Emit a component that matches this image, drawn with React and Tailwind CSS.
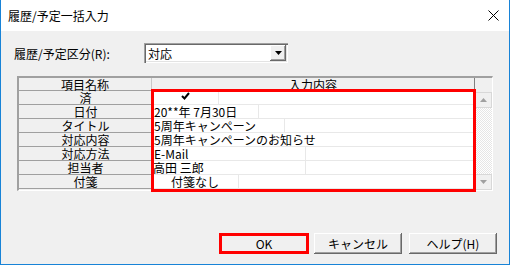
import React from 'react';

const rows = [
  { name: '済', first: 'w-[67px] justify-center', content: 'check' },
  { name: '日付', first: 'w-[107px] pl-[2px]', content: '20**年 7月30日' },
  { name: 'タイトル', first: 'w-[133px] pl-[2px]', content: '5周年キャンペーン' },
  { name: '対応内容', first: 'w-[323px] pl-[2px]', content: '5周年キャンペーンのお知らせ', full: true },
  { name: '対応方法', first: 'w-[154px] pl-[2px]', content: 'E-Mail' },
  { name: '担当者', first: 'w-[154px] pl-[1px]', content: '高田 三郎' },
  { name: '付箋', first: 'w-[87px] justify-center', content: '付箋なし' },
];

function Check() {
  return (
    <svg width="9" height="8" viewBox="0 0 9 8" className="mt-[1px]">
      <path d="M1 4 L3.5 6.5 L8 1" stroke="#000" strokeWidth="2" fill="none" />
    </svg>
  );
}

function Button({ children }) {
  return (
    <div className="w-[88px] h-[21px] flex items-center justify-center bg-[#f0f0f0] shadow-[inset_-1px_-1px_#696969,inset_1px_1px_#ffffff,inset_-2px_-2px_#a0a0a0]">
      {children}
    </div>
  );
}

function ScrollArrow({ up }) {
  return (
    <div className="h-[16px] flex items-center justify-center bg-[#f0f0f0] border border-[#d8d8d8]">
      <svg width="7" height="4" viewBox="0 0 7 4">
        <path d={up ? 'M0 4 L3.5 0 L7 4 Z' : 'M0 0 L3.5 4 L7 0 Z'} fill="#a0a0a0" />
      </svg>
    </div>
  );
}

export default function App() {
  return (
    <div className="w-[510px] h-[265px] flex flex-col border-x border-b border-[#1883d7] bg-[#f0f0f0] text-black text-[12px] leading-[13px] font-['Noto_Sans_CJK_JP','Noto_Sans',sans-serif]">
      {/* title bar */}
      <div className="h-[31px] shrink-0 bg-white flex items-center justify-between pl-[7px] pr-[10px]">
        <span className="text-[12px]">履歴/予定一括入力</span>
        <svg width="11" height="11" viewBox="0 0 11 11">
          <path d="M0.5 0.5 L10.5 10.5 M10.5 0.5 L0.5 10.5" stroke="#000" strokeWidth="1" />
        </svg>
      </div>

      {/* client area */}
      <div className="flex-1 flex flex-col pl-[16px] pt-[12px]">
        <div className="flex items-center h-[20px]">
          <span className="w-[130px] -ml-[3px] pt-[1px]">履歴/予定区分(R):</span>
          <div className="w-[144px] h-[20px] flex items-center bg-white shadow-[inset_1px_1px_#a0a0a0,inset_2px_2px_#696969,inset_-1px_-1px_#ffffff,inset_-2px_-2px_#e3e3e3] pl-[4px] pr-[2px]">
            <span className="flex-1 pt-[1px]">対応</span>
            <div className="w-[16px] h-[16px] flex items-center justify-center bg-[#f0f0f0] shadow-[inset_-1px_-1px_#696969,inset_1px_1px_#ffffff,inset_-2px_-2px_#a0a0a0]">
              <svg width="7" height="4" viewBox="0 0 7 4">
                <path d="M0 0 L3.5 4 L7 0 Z" fill="#000" />
              </svg>
            </div>
          </div>
        </div>

        {/* grid */}
        <div className="relative mt-[13px] w-[476px] h-[115px] flex border-t-2 border-l-2 border-t-[#a0a0a0] border-l-[#a0a0a0] border-b border-r border-b-white border-r-white">
          <div className="w-[456px] flex flex-col">
            <div className="h-[13px] flex border-b border-[#a0a0a0]">
              <div className="w-[133px] flex justify-center border-r border-[#c8c8c8]">項目名称</div>
              <div className="w-[323px] flex justify-center border-r border-[#808080]">入力内容</div>
            </div>
            {rows.map((r) => (
              <div key={r.name} className="h-[14px] flex">
                <div className="w-[133px] flex justify-center border-b border-r border-[#a0a0a0] pl-[1px]">{r.name}</div>
                <div className="w-[323px] flex bg-white border-b border-[#e8e8e8]">
                  <div className={`${r.first} flex whitespace-nowrap ${r.full ? '' : 'border-r border-[#e8e8e8]'}`}>
                    {r.content === 'check' ? <Check /> : r.content}
                  </div>
                </div>
              </div>
            ))}
          </div>
          <div className="w-[17px] flex flex-col">
            <div className="h-[14px] bg-[#f0f0f0]"></div>
            <ScrollArrow up />
            <div className="flex-1 bg-[image:repeating-conic-gradient(#e6e6e6_0_25%,#ffffff_0_50%)] bg-[length:2px_2px]"></div>
            <ScrollArrow />
          </div>
          <div className="absolute left-[132px] top-[11px] w-[325px] h-[103px] border-[3px] border-[#ff0000]"></div>
        </div>

        {/* buttons */}
        <div className="flex mt-[42px] pl-[203px]">
          <div className="relative">
            <Button>OK</Button>
            <div className="absolute -left-[1px] -right-[1px] top-0 bottom-0 border-[3px] border-[#ff0000]"></div>
          </div>
          <div className="ml-[6px]">
            <Button>キャンセル</Button>
          </div>
          <div className="ml-[7px]">
            <Button>ヘルプ(H)</Button>
          </div>
        </div>
      </div>
    </div>
  );
}
